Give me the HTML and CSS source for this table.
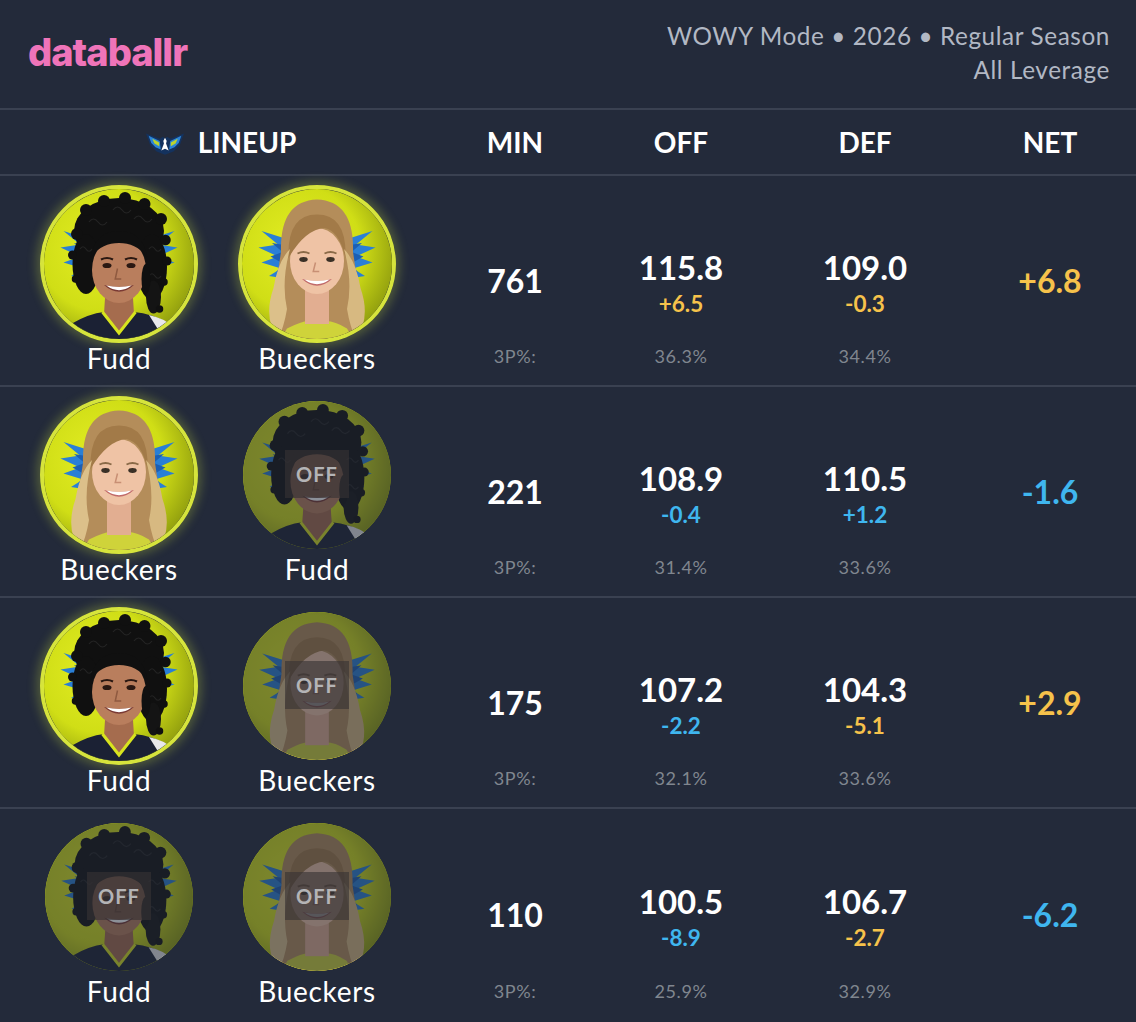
FILE: index.html
```html
<!DOCTYPE html>
<html lang="en">
<head>
<meta charset="utf-8">
<title>databallr WOWY</title>
<link rel="stylesheet" href="styles.css">
</head>
<body>
<svg class="defs" width="0" height="0" aria-hidden="true">
  <defs>
    <radialGradient id="bgY" cx="0.38" cy="0.4" r="0.75">
      <stop offset="0" stop-color="#e4ee24"/>
      <stop offset="0.55" stop-color="#d0de16"/>
      <stop offset="1" stop-color="#7d8a0c"/>
    </radialGradient>
    <symbol id="wing" viewBox="0 0 100 100">
      <path d="M32 34 L13 28 L24 37 L11 39 L24 45 L13 49 L26 53 L18 58 L31 60 Z" fill="#2a7fd6"/>
      <path d="M32 38 L20 36 L27 42 L19 45 L28 50 L23 55 L31 57 Z" fill="#1c5fb4"/>
    </symbol>
    <symbol id="fudd" viewBox="0 0 100 100">
      <rect width="100" height="100" fill="url(#bgY)"/>
      <use href="#wing" width="100" height="100"/>
      <use href="#wing" width="100" height="100" transform="translate(100 0) scale(-1 1)"/>
      <!-- hair back -->
      <ellipse cx="50" cy="28" rx="30" ry="22" fill="#101010"/>
      <ellipse cx="28" cy="50" rx="9" ry="20" fill="#101010"/>
      <ellipse cx="72" cy="52" rx="10" ry="22" fill="#101010"/>
      <ellipse cx="73" cy="72" rx="5" ry="11" fill="#141414"/>
      <g fill="#101010">
        <circle cx="22" cy="30" r="4"/><circle cx="28" cy="14" r="4"/><circle cx="40" cy="8" r="4"/>
        <circle cx="54" cy="6" r="4"/><circle cx="67" cy="10" r="4"/><circle cx="78" cy="20" r="4"/>
        <circle cx="81" cy="34" r="3.5"/><circle cx="19" cy="44" r="3"/><circle cx="82" cy="48" r="3"/>
        <circle cx="80" cy="62" r="2.5"/><circle cx="77" cy="80" r="2.5"/><circle cx="21" cy="60" r="2.5"/>
      </g>
      <g fill="none" stroke="#242424" stroke-width="0.8">
        <path d="M30 22 q3 -4 6 0 q3 4 6 0"/><path d="M46 14 q3 -4 6 0 q3 4 6 0"/>
        <path d="M60 20 q3 -4 6 0 q3 4 6 0"/><path d="M24 40 q2 -3 4 0 q2 3 4 0"/>
        <path d="M70 40 q2 -3 4 0 q2 3 4 0"/><path d="M70 58 q2 -3 4 0 q2 3 4 0"/>
      </g>
      <!-- jersey -->
      <path d="M14 100 L18 90 Q30 83 40 82 L50 94 L60 82 Q72 83 84 90 L88 100 Z" fill="#1b2134"/>
      <path d="M70 84 Q80 86 86 92 L90 100 L80 100 Z" fill="#e8e8ea"/>
      <!-- neck -->
      <path d="M41 68 L59 68 L60 83 L50 95 L40 83 Z" fill="#a56c4e"/>
      <path d="M39 82 L50 96 L61 82" fill="none" stroke="#d8e41e" stroke-width="2"/>
      <!-- face -->
      <ellipse cx="50" cy="54" rx="18" ry="22" fill="#b97e5d"/>
      <path d="M31 46 Q34 28 50 28 Q66 28 69 46 Q62 36 50 36 Q38 36 31 46 Z" fill="#101010"/>
      <path d="M38 47 Q42 45 46 47" stroke="#2a1812" stroke-width="1.4" fill="none"/>
      <path d="M54 47 Q58 45 62 47" stroke="#2a1812" stroke-width="1.4" fill="none"/>
      <ellipse cx="42" cy="51" rx="3" ry="1.7" fill="#2a1812"/>
      <ellipse cx="58" cy="51" rx="3" ry="1.7" fill="#2a1812"/>
      <path d="M49 53 L47.5 60 L51.5 60" stroke="#8f5a40" stroke-width="1" fill="none"/>
      <path d="M40 64 Q50 73 60 64 Q50 66.5 40 64 Z" fill="#7a3a34"/>
      <path d="M41.5 64.4 Q50 70.5 58.5 64.4 Q50 66.2 41.5 64.4 Z" fill="#fff"/>
      <ellipse cx="68" cy="60" rx="3" ry="10" fill="#101010"/>
    </symbol>
    <symbol id="bueckers" viewBox="0 0 100 100">
      <rect width="100" height="100" fill="url(#bgY)"/>
      <use href="#wing" width="100" height="100"/>
      <use href="#wing" width="100" height="100" transform="translate(100 0) scale(-1 1)"/>
      <!-- hair back -->
      <path d="M26 42 Q25 8 50 7 Q75 8 74 42 L78 68 Q82 88 72 100 L28 100 Q18 88 22 68 Z" fill="#b48d5a"/>
      <!-- shirt -->
      <path d="M26 100 L30 93 Q40 88 44 88 L56 88 Q62 88 70 93 L74 100 Z" fill="#cfd33a"/>
      <!-- neck -->
      <rect x="42" y="62" width="16" height="28" fill="#e2ae91"/>
      <!-- face -->
      <ellipse cx="50" cy="48" rx="18" ry="22" fill="#efc3a5"/>
      <path d="M31 46 Q30 17 50 17 Q70 17 69 46 Q65 28 55 26 Q42 27 31 46 Z" fill="#a27a48"/>
      <!-- front hair strands -->
      <path d="M32 40 Q26 62 30 80 Q28 92 24 100 Q14 86 21 66 Q24 48 32 40 Z" fill="#dcc08a"/>
      <path d="M68 40 Q74 62 70 80 Q72 92 76 100 Q86 86 79 66 Q76 48 68 40 Z" fill="#d7b981"/>
      <path d="M37 43 Q41 41 45 43" stroke="#8a6a48" stroke-width="1.3" fill="none"/>
      <path d="M55 43 Q59 41 63 43" stroke="#8a6a48" stroke-width="1.3" fill="none"/>
      <ellipse cx="41" cy="47" rx="2.8" ry="1.6" fill="#3a3026"/>
      <ellipse cx="59" cy="47" rx="2.8" ry="1.6" fill="#3a3026"/>
      <path d="M49 49 L47.5 55 L51.5 55" stroke="#c88f74" stroke-width="1" fill="none"/>
      <path d="M40 60 Q50 69 60 60 Q50 62.5 40 60 Z" fill="#c06a6a"/>
      <path d="M41.5 60.4 Q50 66.5 58.5 60.4 Q50 62.2 41.5 60.4 Z" fill="#fff"/>
    </symbol>
  </defs>
</svg>

<div class="page">
  <header class="top">
    <div class="logo">databallr</div>
    <div class="meta">
      <div>WOWY Mode • 2026 • Regular Season</div>
      <div>All Leverage</div>
    </div>
  </header>

  <div class="row head">
    <div class="lineup-h">
      <svg class="team" viewBox="0 0 36 26" aria-hidden="true">
        <path d="M0 5 L13 10 L16 8 L18 10 L20 8 L23 10 L36 5 L32 16 L26 22 L18 25 L10 22 L4 16 Z" fill="#14325e"/>
        <path d="M2.5 7 L13 12 L14 20 L9 18 L5 14 Z" fill="#2b84d8"/>
        <path d="M33.5 7 L23 12 L22 20 L27 18 L31 14 Z" fill="#2b84d8"/>
        <path d="M6 10 L12.5 13.5 L12.5 17 L8 14.5 Z" fill="#bcd52c"/>
        <path d="M30 10 L23.5 13.5 L23.5 17 L28 14.5 Z" fill="#bcd52c"/>
        <path d="M18 9 L19.6 12 L19 14.5 L21.5 21 L18 19.5 L14.5 21 L17 14.5 L16.4 12 Z" fill="#fff"/>
      </svg>
      <span>LINEUP</span>
    </div>
    <div class="hc">MIN</div>
    <div class="hc">OFF</div>
    <div class="hc">DEF</div>
    <div class="hc net-c">NET</div>
  </div>

  <!-- Row 1 -->
  <div class="row">
    <div class="lineup">
      <div class="player">
        <div class="slot"><div class="avatar on"><svg viewBox="0 0 100 100"><use href="#fudd"/></svg></div></div>
        <div class="name">Fudd</div>
      </div>
      <div class="player">
        <div class="slot"><div class="avatar on"><svg viewBox="0 0 100 100"><use href="#bueckers"/></svg></div></div>
        <div class="name">Bueckers</div>
      </div>
    </div>
    <div class="stat"><div class="main big">761</div><div class="pct">3P%:</div></div>
    <div class="stat"><div class="main grp"><div class="val">115.8</div><div class="sub pos">+6.5</div></div><div class="pct">36.3%</div></div>
    <div class="stat"><div class="main grp"><div class="val">109.0</div><div class="sub pos">-0.3</div></div><div class="pct">34.4%</div></div>
    <div class="stat net-c"><div class="main big pos">+6.8</div></div>
  </div>

  <!-- Row 2 -->
  <div class="row">
    <div class="lineup">
      <div class="player">
        <div class="slot"><div class="avatar on"><svg viewBox="0 0 100 100"><use href="#bueckers"/></svg></div></div>
        <div class="name">Bueckers</div>
      </div>
      <div class="player">
        <div class="slot"><div class="avatar off"><svg viewBox="0 0 100 100"><use href="#fudd"/></svg><span class="off-tag">OFF</span></div></div>
        <div class="name">Fudd</div>
      </div>
    </div>
    <div class="stat"><div class="main big">221</div><div class="pct">3P%:</div></div>
    <div class="stat"><div class="main grp"><div class="val">108.9</div><div class="sub neg">-0.4</div></div><div class="pct">31.4%</div></div>
    <div class="stat"><div class="main grp"><div class="val">110.5</div><div class="sub neg">+1.2</div></div><div class="pct">33.6%</div></div>
    <div class="stat net-c"><div class="main big neg">-1.6</div></div>
  </div>

  <!-- Row 3 -->
  <div class="row">
    <div class="lineup">
      <div class="player">
        <div class="slot"><div class="avatar on"><svg viewBox="0 0 100 100"><use href="#fudd"/></svg></div></div>
        <div class="name">Fudd</div>
      </div>
      <div class="player">
        <div class="slot"><div class="avatar off"><svg viewBox="0 0 100 100"><use href="#bueckers"/></svg><span class="off-tag">OFF</span></div></div>
        <div class="name">Bueckers</div>
      </div>
    </div>
    <div class="stat"><div class="main big">175</div><div class="pct">3P%:</div></div>
    <div class="stat"><div class="main grp"><div class="val">107.2</div><div class="sub neg">-2.2</div></div><div class="pct">32.1%</div></div>
    <div class="stat"><div class="main grp"><div class="val">104.3</div><div class="sub pos">-5.1</div></div><div class="pct">33.6%</div></div>
    <div class="stat net-c"><div class="main big pos">+2.9</div></div>
  </div>

  <!-- Row 4 -->
  <div class="row last">
    <div class="lineup">
      <div class="player">
        <div class="slot"><div class="avatar off"><svg viewBox="0 0 100 100"><use href="#fudd"/></svg><span class="off-tag">OFF</span></div></div>
        <div class="name">Fudd</div>
      </div>
      <div class="player">
        <div class="slot"><div class="avatar off"><svg viewBox="0 0 100 100"><use href="#bueckers"/></svg><span class="off-tag">OFF</span></div></div>
        <div class="name">Bueckers</div>
      </div>
    </div>
    <div class="stat"><div class="main big">110</div><div class="pct">3P%:</div></div>
    <div class="stat"><div class="main grp"><div class="val">100.5</div><div class="sub neg">-8.9</div></div><div class="pct">25.9%</div></div>
    <div class="stat"><div class="main grp"><div class="val">106.7</div><div class="sub pos">-2.7</div></div><div class="pct">32.9%</div></div>
    <div class="stat net-c"><div class="main big neg">-6.2</div></div>
  </div>
</div>
</body>
</html>
```

FILE: styles.css
```css
* { box-sizing: border-box; }

html, body {
  margin: 0;
  padding: 0;
  background: #232a3a;
}

body {
  font-family: Lato, "Noto Sans", "DejaVu Sans", sans-serif;
  color: #ffffff;
}

.defs {
  position: absolute;
  width: 0;
  height: 0;
  overflow: hidden;
}

.page {
  width: 1136px;
}

.top {
  height: 110px;
  display: flex;
  justify-content: space-between;
  align-items: center;
  padding: 0 26px 0 28px;
  border-bottom: 2px solid #3a4151;
}

.logo {
  font-family: Inter, "Noto Sans", sans-serif;
  font-weight: 800;
  font-size: 38px;
  letter-spacing: -1px;
  color: #ef74b9;
  margin-top: -4px;
}

.meta {
  text-align: right;
  font-size: 24.3px;
  letter-spacing: 0.6px;
  line-height: 34px;
  color: #b2b8c4;
  margin-top: -2px;
}

.row {
  display: grid;
  grid-template-columns: 440px 150px 182px 186px 1fr;
  height: 211px;
  border-bottom: 2px solid #3a4151;
}

.row.last {
  border-bottom: none;
}

.row.head {
  height: 66px;
  align-items: center;
  font-weight: 700;
  font-size: 28px;
}

.hc {
  text-align: center;
}

.net-c {
  padding-left: 6px;
}

.lineup-h {
  display: flex;
  justify-content: center;
  align-items: center;
  gap: 14px;
  padding-left: 2px;
}

.team {
  width: 38px;
  height: 28px;
}

.lineup {
  display: flex;
  gap: 18px;
  padding: 9px 0 0 29px;
}

.player {
  width: 180px;
  display: flex;
  flex-direction: column;
  align-items: center;
}

.slot {
  width: 158px;
  height: 158px;
  display: flex;
  align-items: center;
  justify-content: center;
}

.avatar {
  position: relative;
  border-radius: 50%;
  overflow: hidden;
}

.avatar svg {
  display: block;
  width: 100%;
  height: 100%;
}

.avatar.on {
  width: 158px;
  height: 158px;
  border: 4px solid #d6e43c;
  box-shadow: 0 0 10px 4px rgba(190, 210, 60, 0.28);
  overflow: visible;
}

.avatar.on svg {
  border-radius: 50%;
}

.avatar.off {
  width: 148px;
  height: 148px;
}

.avatar.off::after {
  content: "";
  position: absolute;
  inset: 0;
  background: rgba(35, 42, 58, 0.52);
  border-radius: 50%;
}

.off-tag {
  position: absolute;
  left: 50%;
  top: 50%;
  width: 64px;
  height: 48px;
  margin: -25px 0 0 -32px;
  background: rgba(55, 50, 52, 0.62);
  color: #b4b4b6;
  font-weight: 700;
  font-size: 20px;
  letter-spacing: 1px;
  line-height: 48px;
  text-align: center;
  z-index: 1;
}

.name {
  font-size: 28px;
  letter-spacing: 0.7px;
  line-height: 31px;
  color: #ffffff;
}

.stat {
  display: grid;
  text-align: center;
}

.stat > * {
  grid-area: 1 / 1;
}

.main {
  align-self: center;
}

.big {
  font-size: 32px;
  font-weight: 700;
  line-height: 36px;
}

.grp {
  margin-top: 4px;
}

.val {
  font-size: 33px;
  font-weight: 700;
  line-height: 36px;
}

.sub {
  font-size: 22.5px;
  font-weight: 700;
  line-height: 26px;
  margin-top: 6px;
}

.pct {
  align-self: end;
  margin-bottom: 19px;
  font-size: 18px;
  letter-spacing: 0.6px;
  line-height: 20px;
  color: #80868f;
}

.pos { color: #f6c24b; }
.neg { color: #3fb6ef; }
```
